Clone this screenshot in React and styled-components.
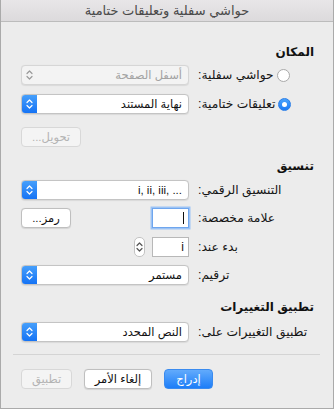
import React from 'react';
import styled, { createGlobalStyle, css } from 'styled-components';

const GlobalStyle = createGlobalStyle`
  html, body {
    margin: 0;
    padding: 0;
    background: #ececec;
  }
  body {
    font-family: "Liberation Sans", "DejaVu Sans", sans-serif;
  }
`;

const Window = styled.div`
  width: 334px;
  height: 409px;
  box-sizing: border-box;
  border: 1px solid #aaaaaa;
  border-top: none;
  background: #ececec;
  direction: rtl;
  display: flex;
  flex-direction: column;
`;

const TitleBar = styled.div`
  height: 22px;
  box-sizing: border-box;
  background: linear-gradient(#e8e6e8, #dcdadc);
  border-bottom: 1px solid #bcbcbc;
  display: flex;
  align-items: center;
  justify-content: center;
  font-size: 13px;
  color: #4a4a4a;
`;

const Content = styled.div`
  padding: 0 19px 0 20px;
  display: flex;
  flex-direction: column;
`;

const Header = styled.div`
  margin-top: ${p => p.$top}px;
  font-size: 12px;
  font-weight: bold;
  line-height: 16px;
  color: #111;
`;

const Row = styled.div`
  margin-top: ${p => p.$top}px;
  height: 20px;
  display: grid;
  grid-template-columns: 116px 1fr;
  column-gap: 9px;
  align-items: center;
`;

const Label = styled.div`
  text-align: left;
  font-size: 12.3px;
  white-space: nowrap;
  color: #151515;
  display: flex;
  justify-content: flex-end;
  align-items: center;
  gap: 3px;
`;

const Radio = styled.span`
  width: 13px;
  height: 13px;
  box-sizing: border-box;
  border-radius: 50%;
  display: inline-flex;
  align-items: center;
  justify-content: center;
  flex: none;
  ${p => p.$checked
    ? css`
        background: linear-gradient(#4aa2fb, #1b7af6);
        border: 1px solid #2a7ee8;
        &::after {
          content: '';
          width: 5px;
          height: 5px;
          border-radius: 50%;
          background: #fff;
        }
      `
    : css`
        background: #fff;
        border: 1px solid #a9a9a9;
      `}
`;

const Popup = styled.div`
  height: 20px;
  box-sizing: border-box;
  display: flex;
  border-radius: 4px;
  overflow: hidden;
  border: 1px solid ${p => (p.$disabled ? '#d6d6d6' : '#c4c4c4')};
  background: ${p => (p.$disabled ? '#f3f3f3' : '#fff')};
  color: ${p => (p.$disabled ? '#a2a2a2' : '#111')};
  box-shadow: 0 0.5px 1px rgba(0, 0, 0, 0.08);
  font-size: 11.5px;
`;

const PopupValue = styled.span`
  flex: 1;
  display: flex;
  align-items: center;
  padding-right: 6px;
  white-space: nowrap;
`;

const PopupCap = styled.span`
  width: 15px;
  flex: none;
  display: flex;
  align-items: center;
  justify-content: center;
  color: ${p => (p.$disabled ? '#9a9a9a' : '#fff')};
  background: ${p => (p.$disabled ? 'transparent' : 'linear-gradient(#469ffb, #1573f5)')};
`;

const Chevrons = ({ color }) => (
  <svg width="7" height="12" viewBox="0 0 7 12" fill="none" stroke={color || 'currentColor'} strokeWidth="1.2" strokeLinecap="round" strokeLinejoin="round">
    <path d="M1 4.5 L3.5 2 L6 4.5" />
    <path d="M1 7.5 L3.5 10 L6 7.5" />
  </svg>
);

const Button = styled.button`
  width: ${p => p.$w}px;
  height: 20px;
  box-sizing: border-box;
  padding: 0;
  border-radius: 4px;
  font-family: inherit;
  font-size: 11.5px;
  display: flex;
  align-items: center;
  justify-content: center;
  ${p => p.$primary
    ? css`
        background: linear-gradient(#62abfc, #1d7ef8);
        border: 1px solid #3a8bef;
        color: #fff;
      `
    : p.disabled
      ? css`
          background: #f4f4f4;
          border: 1px solid #d8d8d8;
          color: #b3b3b3;
        `
      : css`
          background: #fff;
          border: 1px solid #bfbfbf;
          color: #111;
          box-shadow: 0 0.5px 1px rgba(0, 0, 0, 0.1);
        `}
`;

const LeftBar = styled.div`
  margin-top: ${p => p.$top}px;
  display: flex;
  justify-content: flex-end;
  gap: ${p => p.$gap || 0}px;
`;

const Controls = styled.div`
  display: flex;
  align-items: center;
  justify-content: ${p => p.$spread ? 'space-between' : 'flex-start'};
  gap: 7px;
`;

const TextField = styled.div`
  width: 37px;
  height: 20px;
  box-sizing: border-box;
  background: #fff;
  display: flex;
  align-items: center;
  padding-right: 4px;
  font-size: 12px;
  color: #111;
  border: 1px solid ${p => (p.$focus ? '#6fa6ee' : '#b8b8b8')};
  box-shadow: ${p => (p.$focus ? '0 0 0 1.5px #9cc3f5' : 'none')};
`;

const Caret = styled.span`
  width: 1px;
  height: 12px;
  background: #111;
`;

const Stepper = styled.div`
  width: 11px;
  height: 20px;
  box-sizing: border-box;
  border: 1px solid #c3c3c3;
  border-radius: 5px;
  background: #fff;
  display: flex;
  align-items: center;
  justify-content: center;
  color: #555;
`;

const Separator = styled.div`
  margin: ${p => p.$top}px -6px 0 -8px;
  height: 1px;
  background: #d4d4d4;
`;

function PopupField({ value, disabled }) {
  return (
    <Popup $disabled={disabled}>
      <PopupValue>{value}</PopupValue>
      <PopupCap $disabled={disabled}><Chevrons /></PopupCap>
    </Popup>
  );
}

export default function App() {
  return (
    <>
      <GlobalStyle />
      <Window>
        <TitleBar>حواشي سفلية وتعليقات ختامية</TitleBar>
        <Content>
          <Header $top={22}>المكان</Header>
          <Row $top={5}>
            <Label><Radio />حواشي سفلية:</Label>
            <PopupField value="أسفل الصفحة" disabled />
          </Row>
          <Row $top={9}>
            <Label><Radio $checked />تعليقات ختامية:</Label>
            <PopupField value="نهاية المستند" />
          </Row>
          <LeftBar $top={13}>
            <Button $w={60} disabled>تحويل...</Button>
          </LeftBar>

          <Header $top={11}>تنسيق</Header>
          <Row $top={6}>
            <Label>التنسيق الرقمي:</Label>
            <PopupField value={<bdi dir="ltr">i, ii, iii, ...</bdi>} />
          </Row>
          <Row $top={8}>
            <Label>علامة مخصصة:</Label>
            <Controls $spread>
              <TextField $focus><Caret /></TextField>
              <Button $w={50}>رمز...</Button>
            </Controls>
          </Row>
          <Row $top={9}>
            <Label>بدء عند:</Label>
            <Controls>
              <TextField>i</TextField>
              <Stepper><Chevrons /></Stepper>
            </Controls>
          </Row>
          <Row $top={8}>
            <Label>ترقيم:</Label>
            <PopupField value="مستمر" />
          </Row>

          <Header $top={14}>تطبيق التغييرات</Header>
          <Row $top={7}>
            <Label>تطبيق التغييرات على:</Label>
            <PopupField value="النص المحدد" />
          </Row>

          <Separator $top={12} />

          <LeftBar $top={14} $gap={12}>
            <Button $w={49} $primary>إدراج</Button>
            <Button $w={68}>إلغاء الأمر</Button>
            <Button $w={51} disabled>تطبيق</Button>
          </LeftBar>
        </Content>
      </Window>
    </>
  );
}
